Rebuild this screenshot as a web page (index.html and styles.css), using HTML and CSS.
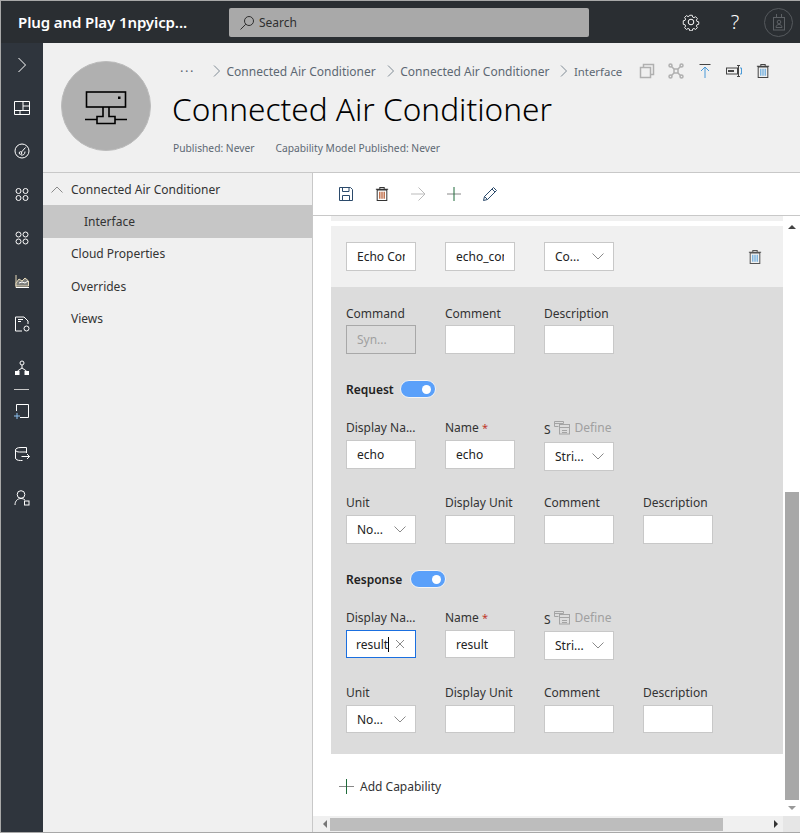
FILE: index.html
```html
<!doctype html>
<html>
   <head>
      <meta charset="utf-8">
      <meta name="viewport" content="width=device-width, initial-scale=1, shrink-to-fit=no">
      <title>Connected Air Conditioner</title>
      <link rel="stylesheet" href="styles.css">
   </head>
   <body>
      <div class="app">
         <header class="topbar">
            <div class="brand">Plug and Play 1npyicp...</div>
            <div class="search">
               <svg width="16" height="16" viewBox="0 0 16 16"><circle cx="10" cy="6" r="4.5"/><path d="M6.8 9.2 1.5 14.5"/></svg>
               <span>Search</span>
            </div>
            <div class="top-actions">
               <svg class="gear" width="18" height="18" viewBox="0 0 18 18"><path d="M7.6 1.5h2.8l.4 2 1.5.7 1.8-1.1 2 2-1.1 1.8.6 1.5 2 .4v2.8l-2 .4-.6 1.5 1.1 1.8-2 2-1.8-1.1-1.5.6-.4 2H7.6l-.4-2-1.5-.6-1.8 1.1-2-2 1.1-1.8-.6-1.5-2-.4V7.6l2-.4.6-1.5-1.1-1.8 2-2 1.8 1.1 1.5-.7z" transform="translate(.9 .9) scale(.9)"/><circle cx="9" cy="9" r="2.8"/></svg>
               <span class="help">?</span>
               <div class="avatar-small">
                  <svg width="14" height="18" viewBox="0 0 14 18"><rect x="1.5" y="4.5" width="11" height="12.5"/><path d="M4.5 4.5V1M9.5 4.5V1"/><circle cx="7" cy="9" r="1.8"/><path d="M4 14.5c0-4 6-4 6 0z"/></svg>
               </div>
            </div>
         </header>
         <div class="body">
            <nav class="rail">
               <a class="rail-btn"><svg width="20" height="20" viewBox="0 0 20 20"><path d="M6.5 3l7 7-7 7"/></svg></a>
               <a class="rail-btn"><svg width="20" height="20" viewBox="0 0 20 20"><path d="M2.5 3.5h15v13h-15zM11 3.5v9M11 8h6.500M2.500 12.500h15M8 12.500v4"/></svg></a>
               <a class="rail-btn"><svg width="20" height="20" viewBox="0 0 20 20"><circle cx="10" cy="10" r="7"/><path d="M13.5 6.500 9.500 11M13 10.500c0 3-2 4-4 3.500"/><circle cx="8.5" cy="12" r="1.3"/></svg></a>
               <a class="rail-btn"><svg width="20" height="20" viewBox="0 0 20 20"><circle cx="6.5" cy="6" r="2.5"/><circle cx="13.5" cy="6" r="2.5"/><circle cx="6.5" cy="13" r="2.5"/><circle cx="13.5" cy="13" r="2.5"/></svg></a>
               <a class="rail-btn"><svg width="20" height="20" viewBox="0 0 20 20"><circle cx="6.5" cy="6.5" r="2.5"/><circle cx="13.5" cy="6.5" r="2.5"/><circle cx="6.5" cy="13.5" r="2.5"/><circle cx="13.5" cy="13.5" r="2.5"/></svg></a>
               <a class="rail-btn"><svg width="20" height="20" viewBox="0 0 20 20"><path class="tan" d="M4 4v12.500h13"/><path class="tan" d="M4 12l3-4 3 2 3-3 3.500 3v5H4z" fill="#7d7f7c"/><path d="M4 16.500h13M7 12l3-1 3 1 3-2"/></svg></a>
               <a class="rail-btn"><svg width="20" height="20" viewBox="0 0 20 20"><path d="M10 17H3.500V3H12l4 4v3M6 5.500h5M6 7.500h3"/><circle cx="14.5" cy="14.5" r="2.5"/></svg></a>
               <a class="rail-btn"><svg width="20" height="20" viewBox="0 0 20 20"><circle cx="10" cy="5" r="2"/><path d="M10 7v3M10 10 5.500 13M10 10l4.500 3"/><rect class="solid" x="3" y="13" width="4.5" height="4"/><rect class="solid" x="12.5" y="13" width="4.5" height="4"/></svg></a>
               <div class="rail-sep"></div>
               <a class="rail-btn"><svg width="20" height="20" viewBox="0 0 20 20"><path d="M4.500 10V3.500h12v13H8"/><path class="blue" d="M2 15h6M5 12v6"/></svg></a>
               <a class="rail-btn"><svg width="20" height="20" viewBox="0 0 20 20"><path d="M3.500 6v8c0 1.500 2 2.500 5 2.500h2M3.500 6c0-1.500 2-2.500 5.500-2.500h5.500V9M3.500 6c0 1.500 2 2 4 2h7"/><path d="M9.500 12.500h8M15 10l2.500 2.500L15 15"/></svg></a>
               <a class="rail-btn"><svg width="20" height="20" viewBox="0 0 20 20"><circle cx="9" cy="6.5" r="3.8"/><path d="M3 17c0-4 2.500-6.500 6-6.500 1.500 0 3 .5 4 1.500"/><rect x="12.5" y="13" width="4.5" height="4"/></svg></a>
            </nav>
            <main class="main">
               <section class="page-head">
                  <div class="device-icon">
                     <svg width="42" height="36" viewBox="0 0 42 36"><rect x="1.5" y="1" width="39" height="15"/><rect class="fill" x="33" y="5.5" width="2.5" height="2.5"/><path d="M18 16V25.500H12V32.500H30V25.500H24V16M0 28.500H12M30 28.500H42"/></svg>
                  </div>
                  <div class="head-text">
                     <div class="crumbs">
                        <span class="more">&middot;&middot;&middot;</span>
                        <svg class="crumb-sep" width="8" height="12" viewBox="0 0 8 12"><path d="M1 .5 6.500 6 1 11.500"/></svg>
                        <span class="crumb">Connected Air Conditioner</span>
                        <svg class="crumb-sep" width="8" height="12" viewBox="0 0 8 12"><path d="M1 .5 6.500 6 1 11.500"/></svg>
                        <span class="crumb">Connected Air Conditioner</span>
                        <svg class="crumb-sep" width="8" height="12" viewBox="0 0 8 12"><path d="M1 .5 6.500 6 1 11.500"/></svg>
                        <span class="crumb crumb-last">Interface</span>
                        <div class="head-actions">
                           <svg class="muted" width="16" height="16" viewBox="0 0 16 16"><rect x="1.5" y="4.5" width="10" height="10"/><path d="M4.500 4.500v-3h10v10h-3"/></svg>
                           <svg class="muted" width="16" height="16" viewBox="0 0 16 16"><rect x="6" y="6" width="4" height="4"/><path d="M6 6 3 3M10 6l3-3M6 10l-3 3M10 10l3 3"/><circle cx="2.5" cy="2.5" r="1.5"/><circle cx="13.5" cy="2.5" r="1.5"/><circle cx="2.5" cy="13.5" r="1.5"/><circle cx="13.5" cy="13.5" r="1.5"/></svg>
                           <svg width="16" height="16" viewBox="0 0 16 16"><path class="dark" d="M2.500 1.500h11"/><path class="sky" d="M8 15V4M4 8l4-4 4 4"/></svg>
                           <svg width="16" height="16" viewBox="0 0 16 16"><rect class="dark" x=".5" y="5" width="11" height="6"/><rect class="fill" x="2" y="7" width="6" height="2"/><path class="dark" d="M12.500 2.500v11M11 2.500h3M11 13.500h3"/><path class="sky" d="M14 5h1.500v6H14"/></svg>
                           <svg class="trash" width="14" height="16" viewBox="0 0 16 18"><path class="dark" d="M2.500 4.500h11v12h-11zM1 3.500h14M5.500 3.500V1.500h5v2"/><path class="sky" d="M5.500 6.500v8M8 6.500v8M10.500 6.500v8"/></svg>
                        </div>
                     </div>
                     <h1 class="title">Connected Air Conditioner</h1>
                     <div class="meta">
                        <span>Published: Never</span>
                        <span>Capability Model Published: Never</span>
                     </div>
                  </div>
               </section>
               <div class="split">
                  <aside class="tree">
                     <div class="tree-item">
                        <svg class="tree-toggle" width="12" height="7" viewBox="0 0 12 7"><path d="M.5 6.500 6 1l5.500 5.500"/></svg>
                        <span>Connected Air Conditioner</span>
                     </div>
                     <div class="tree-item sub selected"><span>Interface</span></div>
                     <div class="tree-item"><span>Cloud Properties</span></div>
                     <div class="tree-item"><span>Overrides</span></div>
                     <div class="tree-item"><span>Views</span></div>
                  </aside>
                  <div class="editor">
                     <div class="toolbar">
                        <svg width="16" height="16" viewBox="0 0 16 16"><path class="navy" d="M1.500 1.500h11l2 2v11h-13zM4.500 1.500v4h6.500v-4M4.500 14.500v-5h7v5"/></svg>
                        <svg class="trash" width="14" height="16" viewBox="0 0 16 18"><path class="dark" d="M2.500 4.500h11v12h-11zM1 3.500h14M5.500 3.500V1.500h5v2"/><path class="rust" d="M5.500 6.500v8M8 6.500v8M10.500 6.500v8"/></svg>
                        <svg class="disabled" width="16" height="16" viewBox="0 0 16 16"><path d="M1 8h14M8.500 1.500 15 8l-6.500 6.500"/></svg>
                        <svg width="16" height="16" viewBox="0 0 16 16"><path class="dark-muted" d="M1 8h14"/><path class="green" d="M8 1v14"/></svg>
                        <svg width="16" height="16" viewBox="0 0 16 16"><path class="navy" d="M1.500 14.500l1-4L11.500 1.500l3 3-9 9zM2.500 10.500l3 3M10 3l3 3"/></svg>
                     </div>
                     <div class="scroll-wrap">
                        <div class="scroll-body">
                           <div class="content">
                              <div class="strip"></div>
                              <div class="cap-head">
                                 <input class="box" value="Echo Command">
                                 <input class="box" value="echo_command">
                                 <div class="box select"><span>Co...</span><svg width="12" height="7" viewBox="0 0 12 7"><path d="M.5.5 6 6l5.500-5.500"/></svg></div>
                                 <svg class="trash cap-trash" width="14" height="16" viewBox="0 0 16 18"><path class="dark" d="M2.500 4.500h11v12h-11zM1 3.500h14M5.500 3.500V1.500h5v2"/><path class="sky" d="M5.500 6.500v8M8 6.500v8M10.500 6.500v8"/></svg>
                              </div>
                              <div class="cap-detail">
                                 <div class="row first">
                                    <div class="field"><label>Command</label><div class="box disabled-box">Syn...</div></div>
                                    <div class="field"><label>Comment</label><input class="box"></div>
                                    <div class="field"><label>Description</label><input class="box"></div>
                                 </div>
                                 <div class="toggle-row">
                                    <b>Request</b><span class="toggle"><i></i></span>
                                 </div>
                                 <div class="row">
                                    <div class="field"><label>Display Na...</label><input class="box" value="echo"></div>
                                    <div class="field"><label>Name <em>*</em></label><input class="box" value="echo"></div>
                                    <div class="field schema">
                                       <label class="schema-label"><span>S</span>
                                          <svg width="16" height="14" viewBox="0 0 16 14"><path d="M4.500 5.500H.5v-5h9v2M.5 2.500h9"/><rect x="5.5" y="3.5" width="10" height="9.5"/><path d="M5.500 6.500h10M8 9.500h5M8 11.500h5"/></svg>
                                          <span class="define">Define</span>
                                       </label>
                                       <div class="box select"><span>Stri...</span><svg width="12" height="7" viewBox="0 0 12 7"><path d="M.5.5 6 6l5.500-5.500"/></svg></div>
                                    </div>
                                 </div>
                                 <div class="row second">
                                    <div class="field"><label>Unit</label><div class="box select"><span>No...</span><svg width="12" height="7" viewBox="0 0 12 7"><path d="M.5.5 6 6l5.500-5.500"/></svg></div></div>
                                    <div class="field"><label>Display Unit</label><input class="box"></div>
                                    <div class="field"><label>Comment</label><input class="box"></div>
                                    <div class="field"><label>Description</label><input class="box"></div>
                                 </div>
                                 <div class="toggle-row response">
                                    <b>Response</b><span class="toggle"><i></i></span>
                                 </div>
                                 <div class="row compact">
                                    <div class="field"><label>Display Na...</label>
                                       <div class="box focused"><span>result</span><span class="caret"></span>
                                          <svg width="10" height="10" viewBox="0 0 10 10"><path d="M1 1l8 8M9 1 1 9"/></svg>
                                       </div>
                                    </div>
                                    <div class="field"><label>Name <em>*</em></label><input class="box" value="result"></div>
                                    <div class="field schema">
                                       <label class="schema-label"><span>S</span>
                                          <svg width="16" height="14" viewBox="0 0 16 14"><path d="M4.500 5.500H.5v-5h9v2M.5 2.500h9"/><rect x="5.5" y="3.5" width="10" height="9.5"/><path d="M5.500 6.500h10M8 9.500h5M8 11.500h5"/></svg>
                                          <span class="define">Define</span>
                                       </label>
                                       <div class="box select"><span>Stri...</span><svg width="12" height="7" viewBox="0 0 12 7"><path d="M.5.5 6 6l5.500-5.500"/></svg></div>
                                    </div>
                                 </div>
                                 <div class="row second compact">
                                    <div class="field"><label>Unit</label><div class="box select"><span>No...</span><svg width="12" height="7" viewBox="0 0 12 7"><path d="M.5.5 6 6l5.500-5.500"/></svg></div></div>
                                    <div class="field"><label>Display Unit</label><input class="box"></div>
                                    <div class="field"><label>Comment</label><input class="box"></div>
                                    <div class="field"><label>Description</label><input class="box"></div>
                                 </div>
                              </div>
                              <div class="add-cap">
                                 <svg width="15" height="15" viewBox="0 0 15 15"><path class="dark-muted" d="M0 7.500h15"/><path class="green" d="M7.500 0v15"/></svg>
                                 <span>Add Capability</span>
                              </div>
                           </div>
                           <div class="vbar">
                              <span class="arrow up"></span>
                              <span class="vbar-gap"></span>
                              <span class="vthumb"></span>
                              <span class="arrow down"></span>
                           </div>
                        </div>
                        <div class="hbar">
                           <span class="arrow left"></span>
                           <span class="hthumb"></span>
                           <span class="hbar-gap"></span>
                           <span class="arrow right"></span>
                           <span class="corner"></span>
                        </div>
                     </div>
                  </div>
               </div>
            </main>
         </div>
      </div>
   </body>
</html>
```

FILE: styles.css
```css
* { box-sizing: border-box; }
html, body { margin: 0; padding: 0; }
body { font-family: "Noto Sans", "Open Sans", sans-serif; font-size: 12px; color: #333; background: #fff; }
svg { display: block; fill: none; stroke: currentColor; stroke-width: 1; flex: none; }

.app { width: 800px; height: 833px; display: flex; flex-direction: column; border-top: 1px solid #a8a8a8; border-left: 1px solid #a8a8a8; border-bottom: 1px solid #a8a8a8; overflow: hidden; }

/* top bar */
.topbar { height: 42px; flex: none; background: #2a2e32; display: flex; align-items: center; color: #fff; }
.brand { width: 228px; padding-left: 17px; font-size: 15px; font-weight: 600; white-space: nowrap; letter-spacing: -.1px; }
.search { width: 360px; height: 29px; margin-top: 1px; background: #a9a9a9; border-radius: 2px; display: flex; align-items: center; gap: 4px; padding-left: 10px; color: #2f2f2f; font-size: 12px; }
.top-actions { display: flex; align-items: center; margin-left: auto; color: #fff; }
.top-actions .gear { margin-right: 29px; color: #fff; }
.help { font-size: 20px; font-weight: 300; line-height: 24px; margin-right: 23px; width: 12px; text-align: center; }
.avatar-small { width: 29px; height: 29px; margin-right: 7px; border: 1px solid #55595d; border-radius: 50%; display: flex; align-items: center; justify-content: center; color: #5d6165; }

.body { flex: 1; display: flex; min-height: 0; }

/* left rail */
.rail { width: 42px; flex: none; background: #2f353d; color: #fff; display: flex; flex-direction: column; }
.rail-btn { height: 43.3px; flex: none; display: flex; align-items: center; justify-content: center; }
.rail-sep { height: 1px; margin: 0 14px -1px 13px; background: #c8c8c8; }
.rail .tan { stroke: #e6d9b8; }
.rail .blue { stroke: #8cc0f0; }
.rail .solid { fill: #fff; stroke: none; }

.main { flex: 1; display: flex; flex-direction: column; min-width: 0; }

/* page header */
.page-head { height: 130px; flex: none; background: #f0f0f0; border-bottom: 1px solid #c8c8c8; display: flex; }
.device-icon { width: 90px; height: 90px; margin: 18px 0 0 18px; border-radius: 50%; background: #b0b0b0; border: 1px solid #bbb; display: flex; align-items: center; justify-content: center; color: #000; }
.device-icon svg { stroke-width: 1.6; margin-top: 5px; }
.device-icon .fill { fill: #000; stroke: none; }
.head-text { flex: 1; padding-left: 22px; min-width: 0; }
.crumbs { display: flex; align-items: center; height: 18px; margin-top: 19px; color: #5d6873; white-space: nowrap; }
.more { width: 22px; margin-left: 7px; letter-spacing: 1.5px; font-size: 13px; }
.crumb-sep { margin: 0 5.5px 0 11px; color: #7f8a94; }
.crumb-last { font-size: 11.4px; }
.head-actions { display: flex; align-items: center; gap: 13px; margin-left: 17px; }
.head-actions .muted { color: #b0b0b0; stroke-width: 1.5; }
.head-actions .dark { stroke: #444; }
.head-actions .sky { stroke: #4a9ad8; }
.head-actions .fill { fill: #444; stroke: none; }
.trash { stroke-width: 1.15; margin: 0 1px; }
.title { margin: 7px 0 0 -1px; font-size: 31.6px; line-height: 44px; font-weight: 300; color: #000; white-space: nowrap; }
.meta { display: flex; gap: 21px; margin-top: 10px; font-size: 10.25px; color: #5d6873; }

.split { flex: 1; display: flex; min-height: 0; }

/* tree */
.tree { width: 270px; flex: none; background: #f0f0f0; border-right: 1px solid #c8c8c8; color: #333; }
.tree-item { height: 32.4px; display: flex; align-items: center; padding-left: 28px; position: relative; }
.tree-item.sub { padding-left: 41px; }
.tree-item.selected { background: #c6c6c6; }
.tree-toggle { position: absolute; left: 8px; top: 13px; color: #8a8a8a; }

/* editor */
.editor { flex: 1; display: flex; flex-direction: column; min-width: 0; }
.toolbar { height: 43px; flex: none; background: #fff; border-bottom: 1px solid #c8c8c8; display: flex; align-items: center; gap: 20px; padding-left: 25px; }
.toolbar .navy { stroke: #2b4a6b; }
.toolbar .dark { stroke: #333; }
.toolbar .rust { stroke: #b5552a; stroke-width: 1.4; }
.toolbar .disabled { color: #bbb; }
.dark-muted { stroke: #888; }
.green { stroke: #1f6b3a; }

.scroll-wrap { flex: 1; display: flex; flex-direction: column; min-height: 0; }
.scroll-body { flex: 1; display: flex; min-height: 0; }
.content { width: 470px; flex: none; padding-left: 18px; background: #fff; overflow: hidden; }
.strip { height: 5px; background: #f0f0f0; margin-bottom: 5px; }

.box { display: flex; align-items: center; width: 70px; height: 29px; border: 1px solid #c8c8c8; background: #fff; padding: 0 10px; font: inherit; color: #222; outline: 0; border-radius: 0; }
.cap-head { height: 61px; background: #f0f0f0; display: flex; align-items: flex-start; gap: 29px; padding: 16px 0 0 15px; }
.cap-trash { margin: 7px 21px 0 auto; }
.cap-trash .dark { stroke: #555; }
.cap-trash .sky { stroke: #4a9ad8; }
.select { justify-content: space-between; padding-right: 9px; }
.select svg { color: #8a8a8a; }
.select span { white-space: nowrap; }
.disabled-box { background: #dcdcdc; border-color: #a8a8a8; color: #a0a0a0; }

.cap-detail { height: 467px; background: #dcdcdc; padding: 17px 0 0 15px; }
.row { display: flex; gap: 29px; align-items: flex-start; }
.row.second { margin-top: 23px; }
.row.second.compact { margin-top: 24px; }
.field { width: 70px; display: flex; flex-direction: column; }
.field label { height: 21px; line-height: 18px; white-space: nowrap; color: #333; }
.row.first label { line-height: 20px; }
.field em { color: #c0392b; font-style: normal; font-size: 11px; }
.schema-label { display: flex; align-items: center; gap: 3px; height: 23px !important; padding-bottom: 6px; }
.schema-label > span:first-child { margin-top: 4px; }
.schema-label svg { color: #a4a4a4; }
.define { color: #a0a0a0; margin-left: 2px; }
.compact .box { height: 28px; }
.compact .schema-label { height: 22px !important; padding-bottom: 5px; }
.compact .schema .box { height: 29px; }
.toggle-row { display: flex; align-items: center; gap: 6px; height: 18px; margin: 26px 0 21px; color: #222; }
.toggle-row.response { gap: 8px; }
.toggle-row b { font-weight: 600; }
.toggle { width: 36px; height: 18px; border-radius: 9px; background: #5aa0fa; border: 1px solid #f4f4f4; display: flex; align-items: center; justify-content: flex-end; padding-right: 4px; }
.toggle i { width: 9px; height: 9px; border-radius: 50%; background: #fff; display: block; }
.focused { border-color: #1a6fe0; padding: 0 9px; }
.focused span:first-child { white-space: nowrap; }
.caret { width: 1px; height: 15px; background: #000; }
.focused svg { margin-left: auto; margin-right: 1px; color: #8a8a8a; }

.add-cap { display: flex; align-items: center; gap: 6px; height: 64px; padding-left: 8px; color: #333; }

/* scrollbars */
.vbar { width: 17px; flex: none; background: #fff; display: flex; flex-direction: column; align-items: center; padding-left: 1px; }
.vbar-gap { flex: 1; }
.vthumb { width: 14px; height: 308px; background: #a8a8a8; }
.arrow { width: 0; height: 0; flex: none; border: 4px solid transparent; }
.arrow.up { border-bottom: 4px solid #444; margin-top: 5px; }
.arrow.down { border-top: 4px solid #999; margin: 6px 0 2px; }
.hbar { height: 16px; flex: none; background: #f0f0f0; display: flex; align-items: center; }
.arrow.left { border-right: 4px solid #777; margin: 0 2px 0 6px; }
.arrow.right { border-left: 4px solid #333; }
.hthumb { width: 393px; height: 13px; background: #bdbdbd; margin-left: 1px; }
.hbar-gap { flex: 1; }
.corner { width: 17px; height: 16px; background: #e6e6e6; margin-left: 1px; }
```
